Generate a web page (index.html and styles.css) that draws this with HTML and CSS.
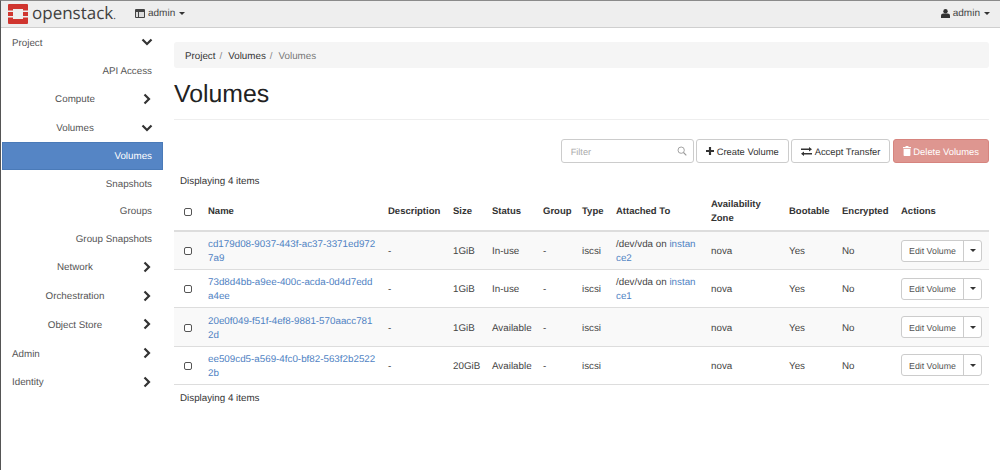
FILE: index.html
```html
<!DOCTYPE html>
<html lang="en">
<head>
<meta charset="utf-8">
<title>Volumes</title>
<link rel="stylesheet" href="styles.css">
</head>
<body>
<header class="navbar">
  <div class="brand">
    <svg class="logo" width="20" height="20" viewBox="0 0 20 20"><path fill="#d0352f" d="M1 0h18a1 1 0 0 1 1 1v5.500h-5V5H5v1.500H0V1a1 1 0 0 1 1-1zM0 8h5v4H0zM15 8h5v4h-5zM0 13.500h5V15h10v-1.500h5V19a1 1 0 0 1-1 1H1a1 1 0 0 1-1-1z"/></svg>
    <span class="wordmark">openstack<span class="dot">.</span></span>
  </div>
  <div class="project-menu">
    <svg width="10" height="9" viewBox="0 0 10 9"><path fill="#444" d="M1 0h8a1 1 0 0 1 1 1v7a1 1 0 0 1-1 1H1a1 1 0 0 1-1-1V1a1 1 0 0 1 1-1z"/><path fill="#ddd" d="M1 3h2v5H1zM4 3h5v5H4z"/></svg>
    <span>admin</span><i class="caret"></i>
  </div>
  <div class="user-menu">
    <svg width="9" height="9" viewBox="0 0 9 9"><circle cx="4.500" cy="2.300" r="2.200" fill="#333"/><path fill="#333" d="M0 9V6.500C0 5.200 1 4.500 2.300 4.500h4.400C8 4.500 9 5.200 9 6.500V9z"/></svg>
    <span>admin</span><i class="caret"></i>
  </div>
</header>
<div class="page">
  <nav class="sidebar">
    <div class="nav-row top"><span class="nav-label">Project</span><svg class="chev" viewBox="0 0 12 12"><path d="M1.500 3.500 6 8l4.500-4.500"/></svg></div>
    <div class="nav-row leaf"><span>API Access</span></div>
    <div class="nav-row group"><span class="nav-label">Compute</span><svg class="chev" viewBox="0 0 12 12"><path d="M3.500 1.500 8 6l-4.500 4.500"/></svg></div>
    <div class="nav-row group"><span class="nav-label">Volumes</span><svg class="chev" viewBox="0 0 12 12"><path d="M1.500 3.500 6 8l4.500-4.500"/></svg></div>
    <div class="nav-row leaf active"><span>Volumes</span></div>
    <div class="nav-row leaf"><span>Snapshots</span></div>
    <div class="nav-row leaf"><span>Groups</span></div>
    <div class="nav-row leaf"><span>Group Snapshots</span></div>
    <div class="nav-row group"><span class="nav-label">Network</span><svg class="chev" viewBox="0 0 12 12"><path d="M3.500 1.500 8 6l-4.500 4.500"/></svg></div>
    <div class="nav-row group"><span class="nav-label">Orchestration</span><svg class="chev" viewBox="0 0 12 12"><path d="M3.500 1.500 8 6l-4.500 4.500"/></svg></div>
    <div class="nav-row group"><span class="nav-label">Object Store</span><svg class="chev" viewBox="0 0 12 12"><path d="M3.500 1.500 8 6l-4.500 4.500"/></svg></div>
    <div class="nav-row top"><span class="nav-label">Admin</span><svg class="chev" viewBox="0 0 12 12"><path d="M3.500 1.500 8 6l-4.500 4.500"/></svg></div>
    <div class="nav-row top"><span class="nav-label">Identity</span><svg class="chev" viewBox="0 0 12 12"><path d="M3.500 1.500 8 6l-4.500 4.500"/></svg></div>
  </nav>
  <main class="content">
    <ol class="breadcrumb">
      <li>Project</li><li class="sep">/</li><li>Volumes</li><li class="sep">/</li><li class="current">Volumes</li>
    </ol>
    <h1 class="title">Volumes</h1>
    <div class="actions">
      <div class="filter">
        <span class="placeholder">Filter</span>
        <svg width="10" height="10" viewBox="0 0 12 12"><circle cx="5" cy="5" r="3.800" fill="none" stroke="#999" stroke-width="1.100"/><path d="m7.800 7.800 3.400 3.400" stroke="#999" stroke-width="1.300"/></svg>
      </div>
      <button class="btn"><svg width="8" height="8" viewBox="0 0 9 9"><path fill="#333" d="M3.300 0h2.400v3.300H9v2.400H5.700V9H3.300V5.700H0V3.300h3.300z"/></svg><span class="lbl">Create Volume</span></button>
      <button class="btn"><svg width="11" height="9" viewBox="0 0 11 9"><path fill="#333" d="M0 1.500h8V0l3 2.300-3 2.300V3H0zM11 6H3V4.400L0 6.700 3 9V7.500h8z"/></svg><span class="lbl">Accept Transfer</span></button>
      <button class="btn danger"><svg width="8" height="10" viewBox="0 0 8 10"><path fill="#fff" d="M2.800 0h2.400l.5 1H8v1.200H0V1h2.300zM.6 3h6.800v6.200a.8.8 0 0 1-.8.800H1.400a.8.8 0 0 1-.8-.8z"/></svg><span class="lbl">Delete Volumes</span></button>
    </div>
    <p class="count">Displaying 4 items</p>
    <table class="volumes">
      <colgroup>
        <col class="c-check"><col class="c-name"><col class="c-desc"><col class="c-size"><col class="c-status"><col class="c-group"><col class="c-type"><col class="c-attached"><col class="c-az"><col class="c-boot"><col class="c-enc"><col class="c-act">
      </colgroup>
      <thead>
        <tr>
          <th><span class="check"></span></th><th>Name</th><th>Description</th><th>Size</th><th>Status</th><th>Group</th><th>Type</th><th>Attached To</th><th>Availability Zone</th><th>Bootable</th><th>Encrypted</th><th>Actions</th>
        </tr>
      </thead>
      <tbody>
        <tr>
          <td><span class="check"></span></td><td><a>cd179d08-9037-443f-ac37-3371ed9727a9</a></td><td>-</td><td>1GiB</td><td>In-use</td><td>-</td><td>iscsi</td><td>/dev/vda on <a>instance2</a></td><td>nova</td><td>Yes</td><td>No</td>
          <td><div class="split"><span class="edit">Edit Volume</span><span class="more"><i class="caret"></i></span></div></td>
        </tr>
        <tr>
          <td><span class="check"></span></td><td><a>73d8d4bb-a9ee-400c-acda-0d4d7edda4ee</a></td><td>-</td><td>1GiB</td><td>In-use</td><td>-</td><td>iscsi</td><td>/dev/vda on <a>instance1</a></td><td>nova</td><td>Yes</td><td>No</td>
          <td><div class="split"><span class="edit">Edit Volume</span><span class="more"><i class="caret"></i></span></div></td>
        </tr>
        <tr>
          <td><span class="check"></span></td><td><a>20e0f049-f51f-4ef8-9881-570aacc7812d</a></td><td>-</td><td>1GiB</td><td>Available</td><td>-</td><td>iscsi</td><td></td><td>nova</td><td>Yes</td><td>No</td>
          <td><div class="split"><span class="edit">Edit Volume</span><span class="more"><i class="caret"></i></span></div></td>
        </tr>
        <tr>
          <td><span class="check"></span></td><td><a>ee509cd5-a569-4fc0-bf82-563f2b25222b</a></td><td>-</td><td>20GiB</td><td>Available</td><td>-</td><td>iscsi</td><td></td><td>nova</td><td>Yes</td><td>No</td>
          <td><div class="split"><span class="edit">Edit Volume</span><span class="more"><i class="caret"></i></span></div></td>
        </tr>
      </tbody>
    </table>
    <p class="count bottom">Displaying 4 items</p>
  </main>
</div>
</body>
</html>
```
FILE: styles.css
```css
* { box-sizing: border-box; }
html, body { margin: 0; height: 100%; }
body {
  width: 1000px;
  height: 470px;
  overflow: hidden;
  background: #fff;
  color: #333;
  font: 9.8px/14px "Liberation Sans", Arial, sans-serif;
  text-rendering: geometricPrecision;
  border-top: 1px solid #8a8a8a;
  border-left: 1px solid #555;
}
.navbar {
  display: flex;
  align-items: center;
  height: 27px;
  background: #eee;
  border-bottom: 1px solid #cfcfcf;
  padding: 0 10px 1px 7px;
}
.brand { display: flex; align-items: center; gap: 4px; width: 127px; }
.logo { display: block; }
.wordmark { font-family: "Open Sans", "Liberation Sans", sans-serif; font-size: 17px; color: #3f3f3f; line-height: 20px; }
.dot { font-size: 10px; }
.project-menu, .user-menu { display: flex; align-items: center; gap: 3px; color: #444; font-size: 10px; }
.user-menu { margin-left: auto; }
.caret {
  display: inline-block;
  width: 0; height: 0;
  margin-left: 1px;
  border: 3px solid transparent;
  border-top-color: #333;
  border-bottom: 0;
}
.page { display: flex; }
.sidebar { width: 162px; flex: none; }
.nav-row { display: flex; align-items: center; height: 28.800px; position: relative; color: #555; padding-top: 3px; padding-right: 11px; }
.nav-row.top { padding-left: 11px; justify-content: space-between; }
.nav-row.group { justify-content: center; padding-left: 17px; padding-right: 31px; }
.nav-row.leaf { justify-content: flex-end; height: 27.600px; }
.nav-row.active { background: #5585c5; color: #fff; margin-left: 1px; box-shadow: inset 0 0 0 1px #4a7ab8; }
.chev { width: 12px; height: 12px; fill: none; stroke: #333; stroke-width: 2.200; position: absolute; right: 10px; top: 50%; margin-top: -6px; }
.content { width: 815px; margin-left: 11px; padding-top: 14px; }
.breadcrumb {
  display: flex;
  align-items: center;
  list-style: none;
  margin: 0;
  height: 26px;
  padding: 3px 11px 0;
  background: #f5f5f5;
  border-radius: 3px;
}
.sep { color: #888; margin: 0 6px 0 4px; }
.current { color: #777; }
.title {
  margin: 0 0 19px;
  padding: 13px 0 11px;
  height: 52px;
  font-size: 24.800px;
  line-height: 28px;
  font-weight: 400;
  color: #222;
  border-bottom: 1px solid #eee;
}
.actions { display: flex; justify-content: flex-end; gap: 2.500px; height: 24px; }
.filter {
  display: flex;
  align-items: center;
  justify-content: space-between;
  width: 133px;
  padding: 0 6px 0 9px;
  border: 1px solid #ccc;
  border-radius: 3px;
  color: #aaa;
  font-size: 9.200px;
}
.placeholder { padding-top: 2px; }
.btn {
  display: flex;
  align-items: center;
  gap: 2.500px;
  padding: 0 9px;
  background: #fff;
  border: 1px solid #ccc;
  border-radius: 3px;
  color: #333;
  font: inherit;
  font-size: 9.400px;
  text-rendering: inherit;
}
.lbl { padding-top: 2px; }
.btn.danger { background: #de9690; border-color: #d6847e; color: #fff; }
.count { margin: 0; padding: 0 6px; }
.actions + .count { margin-top: 12px; height: 19px; }
.bottom { margin-top: 7px; }
.volumes { width: 815px; table-layout: fixed; border-collapse: collapse; }
.c-check { width: 26px; } .c-name { width: 180px; } .c-desc { width: 65px; }
.c-size { width: 39px; } .c-status { width: 51px; } .c-group { width: 39px; }
.c-type { width: 34px; } .c-attached { width: 95px; } .c-az { width: 78px; }
.c-boot { width: 53px; } .c-enc { width: 59px; } .c-act { width: 96px; }
th, td { padding: 6px 3.700px 3px 8px; vertical-align: middle; text-align: left; }
th { height: 37px; padding-top: 4px; padding-bottom: 4px; font-size: 9.500px; font-weight: 700; border-bottom: 2px solid #ddd; white-space: nowrap; }
th:nth-child(9) { white-space: normal; }
td { border-bottom: 1px solid #ddd; height: 38.400px; color: #444; }
td:nth-child(2), td:nth-child(8) { word-break: break-all; }
tbody tr:nth-child(odd) td { background: #f9f9f9; }
a { color: #4f82c3; }
.check {
  display: block;
  width: 8px; height: 8px;
  margin-left: 2px;
  border: 1px solid #555;
  border-radius: 2px;
  background: #fff;
}
td .check { margin-bottom: 2px; }
.split { display: flex; height: 22px; width: 81px; margin-bottom: 3px; border: 1px solid #ccc; border-radius: 3px; background: #fff; color: #555; }
.edit { flex: 1; display: flex; align-items: center; justify-content: center; white-space: nowrap; font-size: 8.800px; padding-top: 1px; }
.more { width: 18px; display: flex; align-items: center; justify-content: center; border-left: 1px solid #ccc; }
.more .caret { margin: 0; }
```
